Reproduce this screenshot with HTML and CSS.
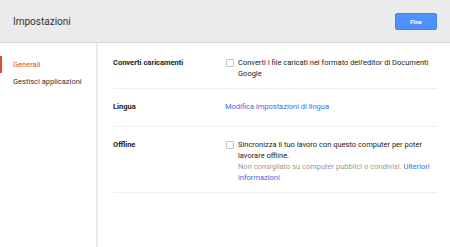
FILE: index.html
```html
<!DOCTYPE html>
<html lang="it">
<head>
<meta charset="utf-8">
<title>Impostazioni</title>
<link rel="stylesheet" href="styles.css">
</head>
<body>
<header class="topbar">
  <h1 class="title">Impostazioni</h1>
  <button class="btn-primary" type="button">Fine</button>
</header>
<div class="main">
  <nav class="sidebar">
    <a class="nav-item active">Generali</a>
    <a class="nav-item">Gestisci applicazioni</a>
  </nav>
  <section class="content">
    <div class="row row-first">
      <div class="label">Converti caricamenti</div>
      <div class="value">
        <label class="check">
          <span class="box"></span>
          <span class="check-text">Converti i file caricati nel formato dell'editor di Documenti Google</span>
        </label>
      </div>
    </div>
    <div class="row row-lang">
      <div class="label">Lingua</div>
      <div class="value"><a class="link">Modifica impostazioni di lingua</a></div>
    </div>
    <div class="row">
      <div class="label">Offline</div>
      <div class="value">
        <label class="check">
          <span class="box"></span>
          <span class="check-text">
            <span class="main-text">Sincronizza il tuo lavoro con questo computer per poter lavorare offline.</span>
            <span class="hint">Non consigliato su computer pubblici o condivisi. <a class="link">Ulteriori informazioni</a></span>
          </span>
        </label>
      </div>
    </div>
  </section>
</div>
</body>
</html>
```
FILE: styles.css
```css
* { box-sizing: border-box; }
html, body { margin: 0; padding: 0; }
body {
  width: 450px;
  height: 247px;
  overflow: hidden;
  background: #fff;
  font-family: Roboto, "Liberation Sans", Arial, sans-serif;
  font-size: 7.5px;
  color: #222;
}
.topbar {
  height: 43px;
  background: #ebebeb;
  border-bottom: 1px solid #d4d4d4;
  display: flex;
  align-items: center;
  justify-content: space-between;
  padding: 0 13px;
}
.title {
  margin: 0;
  font-size: 10px;
  font-weight: 400;
  color: #333;
}
.btn-primary {
  width: 42px;
  height: 17px;
  margin-top: 1px;
  background: #4d90fe;
  border: 1px solid #3f83f0;
  border-radius: 2px;
  color: #fff;
  font-family: inherit;
  font-size: 6px;
  font-weight: 700;
  padding: 0;
}
.main {
  display: flex;
  height: 204px;
}
.sidebar {
  width: 98px;
  border-right: 2px solid #ebebeb;
  padding-top: 13px;
  display: flex;
  flex-direction: column;
}
.nav-item {
  display: block;
  height: 17px;
  line-height: 17px;
  padding-left: 11px;
  color: #333;
  border-left: 2px solid transparent;
}
.nav-item.active {
  color: #dd4b39;
  border-left-color: #dd4b39;
}
.content {
  width: 339px;
  padding-left: 15px;
  padding-top: 2px;
}
.row {
  display: flex;
  border-bottom: 1px solid #eeeeee;
  padding: 12px 0 9px;
  line-height: 11px;
}
.row-lang { padding-bottom: 14px; }
.label {
  width: 112px;
  flex: none;
  font-weight: 700;
  color: #222;
}
.value { flex: 1; }
.check {
  display: flex;
  align-items: flex-start;
}
.box {
  flex: none;
  width: 8px;
  height: 8px;
  margin: 2px 4px 0 1px;
  border: 1px solid #c6c6c6;
  border-radius: 1px;
  background: #fff;
}
.check-text {
  display: block;
  width: 195px;
  color: #222;
}
.main-text { display: block; }
.hint {
  display: block;
  color: #999;
}
.link {
  color: #3f6be0;
  text-decoration: none;
}
```
